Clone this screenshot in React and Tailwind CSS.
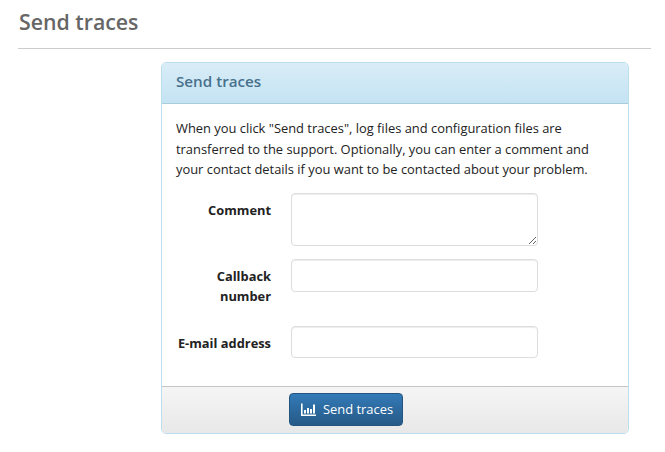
import React from "react";

const font = { fontFamily: '"Open Sans", "Noto Sans", sans-serif' };

function ChartIcon() {
  return (
    <svg width="15" height="14" viewBox="0 0 15 14" fill="white" className="shrink-0">
      <path d="M0 0.5h1.6v11H15V13H0z" />
      <rect x="3" y="7" width="2" height="3.5" />
      <rect x="6" y="5" width="2" height="5.5" />
      <rect x="9" y="6" width="2" height="4.5" />
      <rect x="12" y="1.5" width="2" height="9" />
    </svg>
  );
}

function Row({ label, className, children }) {
  return (
    <div className={`flex ${className}`}>
      <label className="w-[95px] shrink-0 text-right font-bold text-[12.85px] leading-5 text-[#222] pt-[7px]">{label}</label>
      <div className="ml-5 w-[247px]">{children}</div>
    </div>
  );
}

export default function App() {
  return (
    <div className="w-[665px] h-[452px] bg-white overflow-hidden" style={font}>
      <div className="mx-[18px] w-[633px] h-[49px] border-b border-[#ccc] pt-[6px] pl-px">
        <h1 className="text-[21.3px] leading-[32px] font-semibold text-[#666]">Send traces</h1>
      </div>
      <div className="ml-[161px] mt-[13px] w-[468px] h-[372px] flex flex-col rounded-[5px] border border-[#bbdfef] overflow-hidden">
        <div className="h-[41px] shrink-0 border-b border-[#a9ccd9] bg-gradient-to-b from-[#d9edf7] to-[#c4e3f3] px-[14px] pb-[3px] flex items-center">
          <h2 className="text-[15.2px] font-semibold text-[#47708c]">Send traces</h2>
        </div>
        <div className="flex-1 pl-[14px] pt-[14px]">
          <p className="w-[430px] text-[12.9px] leading-[20.5px] text-[#222]">
            When you click "Send traces", log files and configuration files are transferred to the support. Optionally, you can enter a comment and your contact details if you want to be contacted about your problem.
          </p>
          <Row label="Comment" className="mt-[13px]">
            <textarea className="block w-[247px] h-[53px] rounded border border-[#ddd] shadow-[inset_0_1px_1px_rgba(0,0,0,0.075)]" />
          </Row>
          <Row label="Callback number" className="mt-[13px]">
            <input className="block w-[247px] h-[33px] rounded border border-[#ddd] shadow-[inset_0_1px_1px_rgba(0,0,0,0.075)]" />
          </Row>
          <Row label="E-mail address" className="mt-[20px]">
            <input className="block w-[247px] h-[32px] rounded border border-[#ddd] shadow-[inset_0_1px_1px_rgba(0,0,0,0.075)]" />
          </Row>
        </div>
        <div className="h-[47px] shrink-0 border-t border-[#c4c4c4] bg-gradient-to-b from-[#f5f5f5] to-[#e8e8e8] pl-[127px] pt-[6px]">
          <button className="w-[114px] h-[33px] flex items-center pl-[11px] pt-px gap-[7px] rounded border border-[#245580] bg-gradient-to-b from-[#337ab7] to-[#265a88] text-white text-[12.9px]">
            <ChartIcon />
            <span>Send traces</span>
          </button>
        </div>
      </div>
    </div>
  );
}
